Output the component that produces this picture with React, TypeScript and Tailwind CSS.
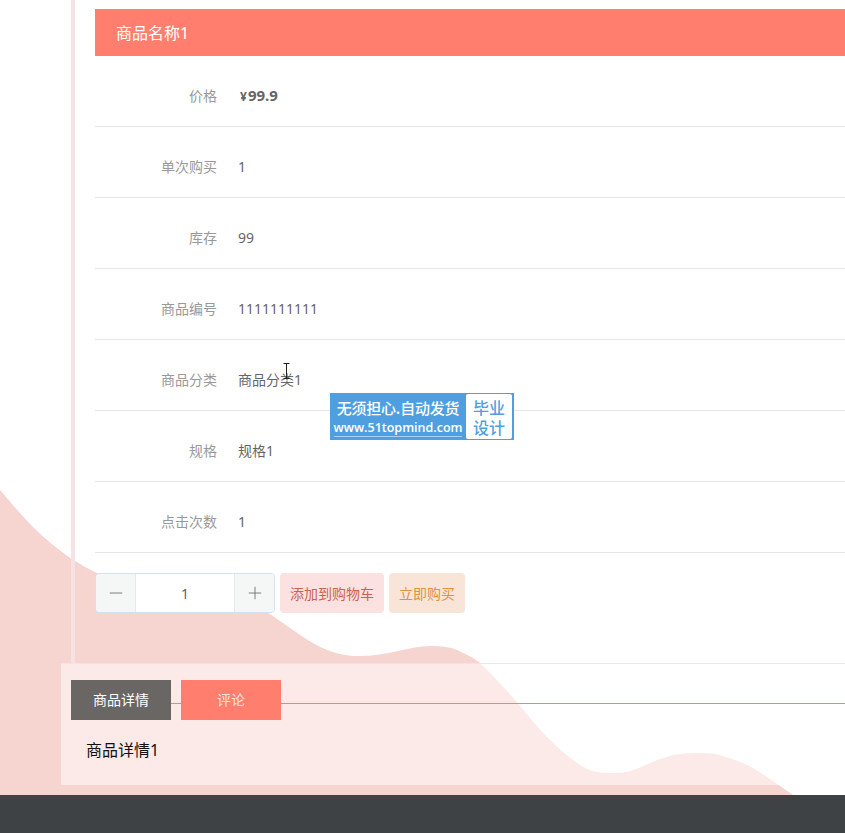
import { Minus, Plus } from 'lucide-react'

const rows = [
    { label: '单次购买', value: '1' },
    { label: '库存', value: '99' },
    { label: '商品编号', value: '1111111111' },
    { label: '商品分类', value: '商品分类1' },
    { label: '规格', value: '规格1' },
    { label: '点击次数', value: '1' },
]

function Wave() {
    return (
        <svg className="absolute left-0 top-0" width="845" height="833" viewBox="0 0 845 833">
            <path
                fill="#f6d5d1"
                d="M0 490 C11 503 22 516 33 527 C45 539 58 549 70 558 C80 564 88 569 97 573 C150 590 230 590 267 612 C276 618 284 624 293 630 C310 642 330 655 355 656 C385 657 410 646 430 646 C442 646 450 647 457 650 C465 654 473 657 480 663 C493 675 505 689 517 702 C527 714 537 727 547 737 C557 747 567 756 577 763 C587 770 597 773 607 773 C617 773 625 773 633 770 C645 766 655 760 667 757 C676 754 685 753 693 753 C703 753 712 753 720 755 C732 759 742 762 753 768 C767 777 780 786 793 795 L793 833 L0 833 Z"
            />
        </svg>
    )
}

function Watermark() {
    return (
        <div className="absolute left-[330px] top-[393px] flex h-[47px] w-[184px] bg-[#4f9fe0] pr-[2px] font-['Noto_Sans_CJK_SC',sans-serif] text-white">
            <div className="flex w-[136px] flex-col items-center pt-[5px]">
                <span className="text-[15px] leading-[20px] font-medium tracking-[-0.2px] whitespace-nowrap">无须担心.自动发货</span>
                <span className="mt-[2px] border-b border-[#a8d0f0] font-['Open_Sans',sans-serif] text-[12.5px] leading-[16px] font-semibold whitespace-nowrap">www.51topmind.com</span>
            </div>
            <div className="my-[1px] flex w-[46px] flex-col items-center justify-center rounded-[2px] bg-white text-[16px] leading-[20px] font-medium text-[#4f9fe0]">
                <span>毕业</span>
                <span>设计</span>
            </div>
        </div>
    )
}

function IBeam() {
    return (
        <svg className="absolute left-[282px] top-[363px]" width="9" height="17" viewBox="0 0 9 17" fill="none" stroke="#222" strokeWidth="1">
            <path d="M1.5 .5h6M4.5 .5v15M1.5 15.5h6" />
        </svg>
    )
}

export default function App() {
    return (
        <div className="relative h-[833px] w-[845px] overflow-hidden bg-white font-['Noto_Sans','Noto_Sans_CJK_SC',sans-serif]">
            <Wave />
            <div className="relative flex h-[833px] flex-col">
                <div className="ml-[71px] h-[663px] border-l-4 border-[#f6e2e4] pl-[20px] pt-[9px]">
                    <div className="flex h-[47px] items-center bg-[#ff7e6e] pl-[21px] text-[16px] text-white">商品名称1</div>

                    <div className="flex h-[71px] items-center border-b border-[#e6e6e6] pt-[8px]">
                        <span className="w-[122px] text-right text-[14px] text-[#999]">价格</span>
                        <span className="ml-[23px] flex items-baseline font-bold text-[#666]">
                            <span className="text-[12px]">¥</span>
                            <span className="ml-[1px] text-[15px]">99.9</span>
                        </span>
                    </div>

                    {rows.map((r) => (
                        <div key={r.label} className="flex h-[71px] items-center border-b border-[#e6e6e6] pt-[8px]">
                            <span className="w-[122px] text-right text-[14px] text-[#999]">{r.label}</span>
                            <span className="ml-[21px] text-[14px] text-[#666]">{r.value}</span>
                        </div>
                    ))}

                    <div className="mt-[20px] flex h-[40px] items-center">
                        <div className="flex h-[40px] w-[180px] overflow-hidden rounded-[4px] border border-[#d3e2ec]">
                            <div className="flex w-[40px] items-center justify-center border-r border-[#e4e7ed] bg-[#f5f7f7] text-[#7d7d7d]">
                                <Minus size={20} strokeWidth={1.2} />
                            </div>
                            <div className="flex flex-1 items-center justify-center bg-white text-[14px] text-[#606266]">1</div>
                            <div className="flex w-[40px] items-center justify-center border-l border-[#e4e7ed] bg-[#f5f7f7] text-[#7d7d7d]">
                                <Plus size={20} strokeWidth={1.2} />
                            </div>
                        </div>
                        <button className="ml-[5px] h-[40px] w-[104px] rounded-[4px] bg-[#fbe2e0] text-[14px] text-[#c9624f]">添加到购物车</button>
                        <button className="ml-[5px] h-[40px] w-[76px] rounded-[4px] bg-[#f8e5d8] text-[14px] text-[#e2913f]">立即购买</button>
                    </div>
                </div>

                <div className="ml-[61px] h-[122px] border-t border-[#ebe5e5] bg-white/50 pl-[10px] pt-[16px]">
                    <div className="relative flex h-[40px] gap-[10px]">
                        <div className="absolute left-0 right-0 top-[23px] h-px bg-[#e58a7b]" />
                        <div className="relative flex w-[100px] items-center justify-center bg-[#696663] pb-[2px] text-[14px] text-white">商品详情</div>
                        <div className="relative flex w-[100px] items-center justify-center bg-[#ff7e6e] pb-[2px] text-[14px] text-[#fde4dc]">评论</div>
                    </div>
                    <div className="mt-[19px] pl-[15px] text-[16px] leading-[22px] font-normal text-[#111]">商品详情1</div>
                </div>

                <div className="mt-[10px] h-[38px] bg-[#3f4244]" />
            </div>
            <IBeam />
            <Watermark />
        </div>
    )
}
